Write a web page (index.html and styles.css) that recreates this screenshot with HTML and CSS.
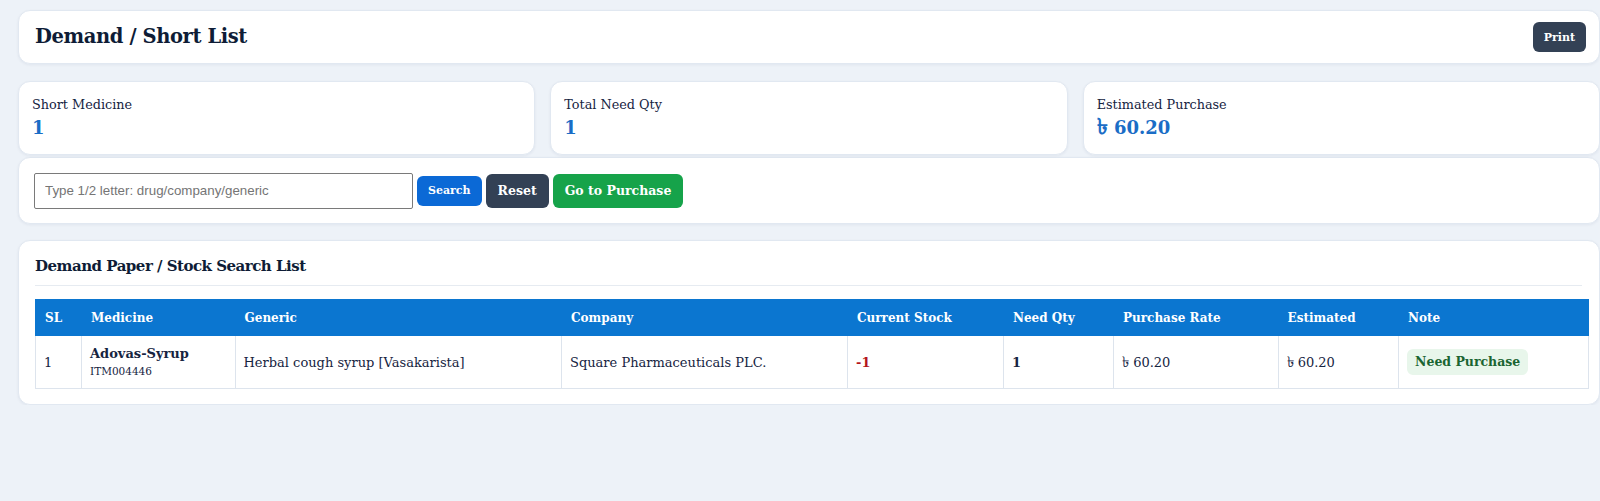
FILE: index.html
```html
<!DOCTYPE html>
<html lang="en">
<head>
<meta charset="utf-8">
<title>Demand / Short List</title>
<link rel="stylesheet" href="styles.css">
</head>
<body>
<div class="page">
  <header class="card topbar">
    <h1 class="page-title">Demand / Short List</h1>
    <button class="btn btn-dark btn-sm" type="button">Print</button>
  </header>

  <section class="stats">
    <div class="card stat">
      <div class="stat-label">Short Medicine</div>
      <div class="stat-value">1</div>
    </div>
    <div class="card stat">
      <div class="stat-label">Total Need Qty</div>
      <div class="stat-value">1</div>
    </div>
    <div class="card stat">
      <div class="stat-label">Estimated Purchase</div>
      <div class="stat-value"><span class="taka">৳</span> 60.20</div>
    </div>
  </section>

  <section class="card searchbar">
    <input class="search-input" type="text" placeholder="Type 1/2 letter: drug/company/generic">
    <button class="btn btn-blue btn-sm" type="button">Search</button>
    <button class="btn btn-dark btn-md" type="button">Reset</button>
    <button class="btn btn-green btn-md" type="button">Go to Purchase</button>
  </section>

  <section class="card list">
    <h2 class="list-title">Demand Paper / Stock Search List</h2>
    <table class="grid">
      <colgroup>
        <col class="c-sl"><col class="c-med"><col class="c-gen"><col class="c-com"><col class="c-stock"><col class="c-need"><col class="c-rate"><col class="c-est"><col class="c-note">
      </colgroup>
      <thead>
        <tr>
          <th>SL</th><th>Medicine</th><th>Generic</th><th>Company</th><th>Current Stock</th><th>Need Qty</th><th>Purchase Rate</th><th>Estimated</th><th>Note</th>
        </tr>
      </thead>
      <tbody>
        <tr>
          <td>1</td>
          <td><div class="med-name">Adovas-Syrup</div><div class="med-code">ITM004446</div></td>
          <td>Herbal cough syrup [Vasakarista]</td>
          <td>Square Pharmaceuticals PLC.</td>
          <td class="neg">-1</td>
          <td class="strong">1</td>
          <td><span class="taka-sm">৳</span> 60.20</td>
          <td><span class="taka-sm">৳</span> 60.20</td>
          <td><span class="badge">Need Purchase</span></td>
        </tr>
      </tbody>
    </table>
  </section>
</div>
</body>
</html>
```

FILE: styles.css
```css
html, body {
  margin: 0;
}
body {
  background: #edf2f8;
  font-family: "DejaVu Serif", "Liberation Serif", serif;
  color: #13233f;
}
.page {
  width: 1582px;
  padding: 10px 0 0 18px;
}
.card {
  background: #ffffff;
  border: 1px solid #e1e8f1;
  border-radius: 12px;
  box-shadow: 0 1px 3px rgba(20, 40, 80, 0.06);
  box-sizing: border-box;
}
.topbar {
  height: 54px;
  display: flex;
  align-items: center;
  justify-content: space-between;
  padding: 0 13px 0 16px;
}
.page-title {
  margin: 0;
  font-size: 19.5px;
  letter-spacing: -0.4px;
  line-height: 26px;
  font-weight: 700;
  color: #0e1c36;
}
.btn {
  border: 0;
  border-radius: 6px;
  color: #ffffff;
  font-family: inherit;
  font-weight: 700;
  padding: 0 12px;
  cursor: pointer;
}
.btn-sm {
  height: 30px;
  font-size: 11px;
  padding: 0 11px;
}
.btn-md {
  height: 34px;
  font-size: 12.5px;
}
.btn-dark {
  background: #334155;
}
.btn-blue {
  background: #0b69d6;
}
.btn-green {
  background: #16a34a;
}
.stats {
  display: grid;
  grid-template-columns: repeat(3, 1fr);
  gap: 15px;
  margin-top: 17px;
}
.stat {
  height: 74px;
  padding: 13px 13px;
}
.stat-label {
  font-size: 12.8px;
  line-height: 20px;
  color: #16243f;
}
.stat-value {
  font-size: 18px;
  line-height: 25px;
  font-weight: 700;
  color: #1a6dc6;
}
.taka {
  font-size: 22px;
  line-height: 20px;
}
.taka-sm {
  font-size: 15px;
  line-height: 16px;
}
.searchbar {
  margin-top: 2px;
  height: 67px;
  display: flex;
  align-items: center;
  gap: 4px;
  padding: 0 15px;
}
.search-input {
  width: 379px;
  height: 36px;
  box-sizing: border-box;
  border: 1px solid #7a7a7a;
  border-radius: 2px;
  padding: 0 10px;
  font: 13.33px "Liberation Sans", Arial, sans-serif;
  color: #222;
}
.search-input::placeholder {
  color: #757575;
}
.list {
  margin-top: 16px;
  padding: 15px 17px 15px 16px;
}
.list-title {
  margin: 0;
  font-size: 15px;
  letter-spacing: -0.5px;
  line-height: 20px;
  font-weight: 700;
  color: #0e1c36;
  padding-bottom: 9px;
  border-bottom: 1px solid #e6ebf1;
}
.grid {
  width: 100%;
  margin-top: 13px;
  border-collapse: collapse;
  table-layout: fixed;
  font-size: 13px;
}
.c-sl { width: 46px; }
.c-med { width: 153.5px; }
.c-gen { width: 326.5px; }
.c-com { width: 286px; }
.c-stock { width: 156px; }
.c-need { width: 110px; }
.c-rate { width: 164.5px; }
.c-est { width: 120.5px; }
.c-note { width: 190px; }
.grid th {
  background: #0b76d0;
  color: #ffffff;
  font-size: 12px;
  font-weight: 700;
  text-align: left;
  height: 35px;
  padding: 0 9px;
  border: 1px solid #0b76d0;
}
.grid td {
  height: 53px;
  padding: 0 8px;
  border: 1px solid #dde4ed;
  color: #16243f;
  box-sizing: border-box;
}
.med-name {
  font-weight: 700;
  font-size: 13px;
  line-height: 18px;
}
.med-code {
  font-size: 10.5px;
  line-height: 17px;
}
.grid td.neg {
  color: #b4141c;
  font-weight: 700;
}
.grid td.strong {
  font-weight: 700;
}
.badge {
  display: inline-block;
  background: #e8f6eb;
  color: #1b6532;
  font-weight: 700;
  font-size: 12.5px;
  line-height: 26px;
  padding: 0 8px;
  border-radius: 6px;
}
```
